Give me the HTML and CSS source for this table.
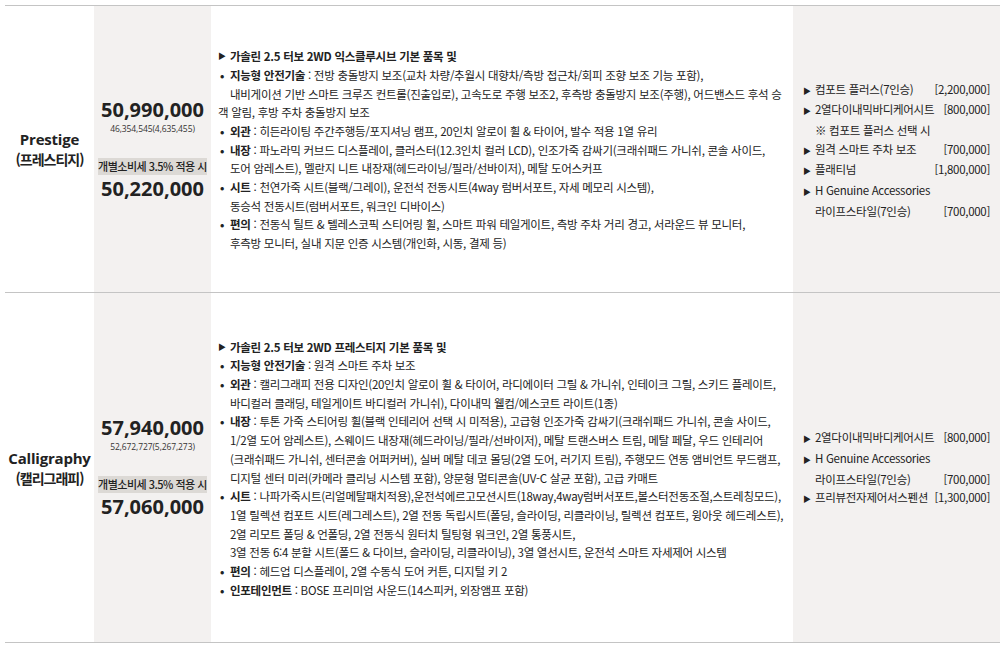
FILE: index.html
```html
<!DOCTYPE html>
<html lang="ko">
<head>
<meta charset="utf-8">
<title>트림별 가격표</title>
<link rel="stylesheet" href="styles.css">
</head>
<body>
<div class="table">
  <div class="row row1">
    <div class="cell name">
      <div class="en">Prestige</div>
      <div class="ko">(프레스티지)</div>
    </div>
    <div class="cell price">
      <div class="big">50,990,000</div>
      <div class="sub">46,354,545(4,635,455)</div>
      <div class="badge">개별소비세 3.5% 적용 시</div>
      <div class="big big2">50,220,000</div>
    </div>
    <div class="cell spec">
      <div class="ln head"><span class="tri">▶</span><b>가솔린 2.5 터보 2WD 익스클루시브 기본 품목 및</b></div>
      <div class="ln"><span class="bul">•</span><span><b>지능형 안전기술</b> : 전방 충돌방지 보조(교차 차량/추월시 대향차/측방 접근차/회피 조향 보조 기능 포함),</span></div>
      <div class="ln ind">내비게이션 기반 스마트 크루즈 컨트롤(진출입로), 고속도로 주행 보조2, 후측방 충돌방지 보조(주행), 어드밴스드 후석 승</div>
      <div class="ln">객 알림, 후방 주차 충돌방지 보조</div>
      <div class="ln"><span class="bul">•</span><span><b>외관</b> : 히든라이팅 주간주행등/포지셔닝 램프, 20인치 알로이 휠 &amp; 타이어, 발수 적용 1열 유리</span></div>
      <div class="ln"><span class="bul">•</span><span><b>내장</b> : 파노라믹 커브드 디스플레이, 클러스터(12.3인치 컬러 LCD), 인조가죽 감싸기(크래쉬패드 가니쉬, 콘솔 사이드,</span></div>
      <div class="ln ind">도어 암레스트), 멜란지 니트 내장재(헤드라이닝/필라/선바이저), 메탈 도어스커프</div>
      <div class="ln"><span class="bul">•</span><span><b>시트</b> : 천연가죽 시트(블랙/그레이), 운전석 전동시트(4way 럼버서포트, 자세 메모리 시스템),</span></div>
      <div class="ln ind">동승석 전동시트(럼버서포트, 워크인 디바이스)</div>
      <div class="ln"><span class="bul">•</span><span><b>편의</b> : 전동식 틸트 &amp; 텔레스코픽 스티어링 휠, 스마트 파워 테일게이트, 측방 주차 거리 경고, 서라운드 뷰 모니터,</span></div>
      <div class="ln ind">후측방 모니터, 실내 지문 인증 시스템(개인화, 시동, 결제 등)</div>
    </div>
    <div class="cell opt">
      <div class="oln"><span class="tri">▶</span><span class="on">컴포트 플러스(7인승)</span><span class="op">[2,200,000]</span></div>
      <div class="oln"><span class="tri">▶</span><span class="on">2열다이내믹바디케어시트</span><span class="op">[800,000]</span></div>
      <div class="oln ind"><span class="on">※ 컴포트 플러스 선택 시</span></div>
      <div class="oln"><span class="tri">▶</span><span class="on">원격 스마트 주차 보조</span><span class="op">[700,000]</span></div>
      <div class="oln"><span class="tri">▶</span><span class="on">플래티넘</span><span class="op">[1,800,000]</span></div>
      <div class="oln"><span class="tri">▶</span><span class="on">H Genuine Accessories</span></div>
      <div class="oln ind"><span class="on">라이프스타일(7인승)</span><span class="op">[700,000]</span></div>
    </div>
  </div>
  <div class="row row2">
    <div class="cell name">
      <div class="en">Calligraphy</div>
      <div class="ko">(캘리그래피)</div>
    </div>
    <div class="cell price">
      <div class="big">57,940,000</div>
      <div class="sub">52,672,727(5,267,273)</div>
      <div class="badge">개별소비세 3.5% 적용 시</div>
      <div class="big big2">57,060,000</div>
    </div>
    <div class="cell spec">
      <div class="ln head"><span class="tri">▶</span><b>가솔린 2.5 터보 2WD 프레스티지 기본 품목 및</b></div>
      <div class="ln"><span class="bul">•</span><span><b>지능형 안전기술</b> : 원격 스마트 주차 보조</span></div>
      <div class="ln"><span class="bul">•</span><span><b>외관</b> : 캘리그래피 전용 디자인(20인치 알로이 휠 &amp; 타이어, 라디에이터 그릴 &amp; 가니쉬, 인테이크 그릴, 스키드 플레이트,</span></div>
      <div class="ln ind">바디컬러 클래딩, 테일게이트 바디컬러 가니쉬), 다이내믹 웰컴/에스코트 라이트(1종)</div>
      <div class="ln"><span class="bul">•</span><span><b>내장</b> : 투톤 가죽 스티어링 휠(블랙 인테리어 선택 시 미적용), 고급형 인조가죽 감싸기(크래쉬패드 가니쉬, 콘솔 사이드,</span></div>
      <div class="ln ind">1/2열 도어 암레스트), 스웨이드 내장재(헤드라이닝/필라/선바이저), 메탈 트랜스버스 트림, 메탈 페달, 우드 인테리어</div>
      <div class="ln ind">(크래쉬패드 가니쉬, 센터콘솔 어퍼커버), 실버 메탈 데코 몰딩(2열 도어, 러기지 트림), 주행모드 연동 앰비언트 무드램프,</div>
      <div class="ln ind">디지털 센터 미러(카메라 클리닝 시스템 포함), 양문형 멀티콘솔(UV-C 살균 포함), 고급 카매트</div>
      <div class="ln"><span class="bul">•</span><span><b>시트</b> : 나파가죽시트(리얼메탈패치적용),운전석에르고모션시트(18way,4way럼버서포트,볼스터전동조절,스트레칭모드),</span></div>
      <div class="ln ind">1열 릴렉션 컴포트 시트(레그레스트), 2열 전동 독립시트(폴딩, 슬라이딩, 리클라이닝, 릴렉션 컴포트, 윙아웃 헤드레스트),</div>
      <div class="ln ind">2열 리모트 폴딩 &amp; 언폴딩, 2열 전동식 원터치 틸팅형 워크인, 2열 통풍시트,</div>
      <div class="ln ind">3열 전동 6:4 분할 시트(폴드 &amp; 다이브, 슬라이딩, 리클라이닝), 3열 열선시트, 운전석 스마트 자세제어 시스템</div>
      <div class="ln"><span class="bul">•</span><span><b>편의</b> : 헤드업 디스플레이, 2열 수동식 도어 커튼, 디지털 키 2</span></div>
      <div class="ln"><span class="bul">•</span><span><b>인포테인먼트</b> : BOSE 프리미엄 사운드(14스피커, 외장앰프 포함)</span></div>
    </div>
    <div class="cell opt">
      <div class="oln"><span class="tri">▶</span><span class="on">2열다이내믹바디케어시트</span><span class="op">[800,000]</span></div>
      <div class="oln"><span class="tri">▶</span><span class="on">H Genuine Accessories</span></div>
      <div class="oln ind"><span class="on">라이프스타일(7인승)</span><span class="op">[700,000]</span></div>
      <div class="oln"><span class="tri">▶</span><span class="on">프리뷰전자제어서스펜션</span><span class="op">[1,300,000]</span></div>
    </div>
  </div>
</div>
</body>
</html>
```

FILE: styles.css
```css
* { box-sizing: border-box; }
html, body { margin: 0; padding: 0; background: #fff; }
body {
  font-family: "Noto Sans CJK KR", "Noto Sans", sans-serif;
  color: #222;
  padding-top: 5px;
  padding-left: 5px;
}
.table {
  border-top: 1px solid #c4c4c4;
  width: 995px;
}
.row {
  display: grid;
  grid-template-columns: 89px 117px 582px 207px;
  border-bottom: 1px solid #c4c4c4;
}
.row1 { height: 287px; }
.row2 { height: 350px; }
.cell {
  display: flex;
  flex-direction: column;
  justify-content: center;
}
.name { align-items: center; text-align: center; }
.name .en {
  font-family: "Open Sans", "Noto Sans CJK KR", sans-serif;
  font-weight: 700;
  font-size: 15px;
  line-height: 20px;
  letter-spacing: -0.2px;
}
.name .ko {
  font-weight: 700;
  font-size: 14px;
  line-height: 20px;
  letter-spacing: -1px;
}
.price {
  background: #f3f1f0;
  align-items: stretch;
  text-align: center;
}
.price .big {
  font-family: "Open Sans", "Noto Sans CJK KR", sans-serif;
  font-weight: 700;
  font-size: 20px;
  line-height: 22px;
}
.price .sub {
  font-family: "Open Sans", sans-serif;
  font-size: 8.5px;
  line-height: 12px;
  margin-top: 2px;
  letter-spacing: -0.1px;
  color: #333;
}
.price .badge {
  margin: 23px 4px 0;
  background: #dcd9d5;
  font-size: 11px;
  line-height: 17px;
  letter-spacing: -0.5px;
  font-weight: 500;
}
.price .big2 { margin-top: 3px; }
.spec {
  padding-left: 7px;
  padding-top: 2px;
  font-size: 11.5px;
  line-height: 18.7px;
  letter-spacing: -0.28px;
}
.ln { display: flex; white-space: nowrap; }
.ln b { font-weight: 700; }
.ln.ind { padding-left: 12px; }
.tri {
  display: inline-block;
  width: 12px;
  font-size: 8px;
  flex: none;
}
.bul {
  display: inline-block;
  width: 12px;
  flex: none;
  padding-left: 2px;
  font-weight: 700;
}
.opt {
  background: #f3f1f0;
  padding: 2px 10px 0 10px;
  font-size: 11.5px;
  line-height: 18.7px;
  letter-spacing: -0.3px;
}
.oln { display: flex; white-space: nowrap; align-items: baseline; }
.oln.ind { padding-left: 12px; }
.oln .tri { width: 12px; }
.oln .on { flex: 1; }
.oln .op { flex: none; }
```
